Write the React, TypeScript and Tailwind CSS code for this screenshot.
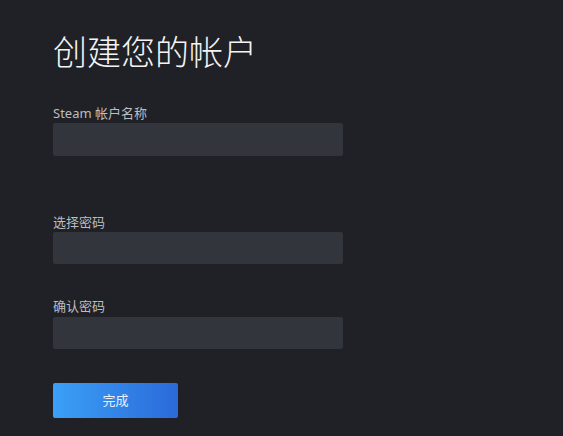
import React from "react";

export default function App() {
  const font = { fontFamily: '"Noto Sans", "Noto Sans CJK SC", sans-serif' };
  return (
    <div className="w-[563px] h-[436px] bg-[#1f2126] overflow-hidden" style={font}>
      <div className="pl-[53px] pt-[32px] flex flex-col">
        <h1 className="text-[34px] leading-[40px] text-[#f4f4f4] font-light">创建您的帐户</h1>
        <label className="mt-[33px] text-[13px] leading-[16px] text-[#bcbdc0]">Steam 帐户名称</label>
        <div className="mt-[2px] w-[290px] h-[33px] bg-[#32353c] rounded-[2px]" />
        <label className="mt-[58px] text-[13px] leading-[16px] text-[#bcbdc0]">选择密码</label>
        <div className="mt-[2px] w-[290px] h-[32px] bg-[#32353c] rounded-[2px]" />
        <label className="mt-[34px] text-[13px] leading-[16px] text-[#bcbdc0]">确认密码</label>
        <div className="mt-[3px] w-[290px] h-[32px] bg-[#32353c] rounded-[2px]" />
        <button className="mt-[34px] w-[125px] h-[35px] rounded-[2px] bg-gradient-to-r from-[#3ca0f6] to-[#2b69da] text-[13px] text-[#e8f0fb]">完成</button>
      </div>
    </div>
  );
}
